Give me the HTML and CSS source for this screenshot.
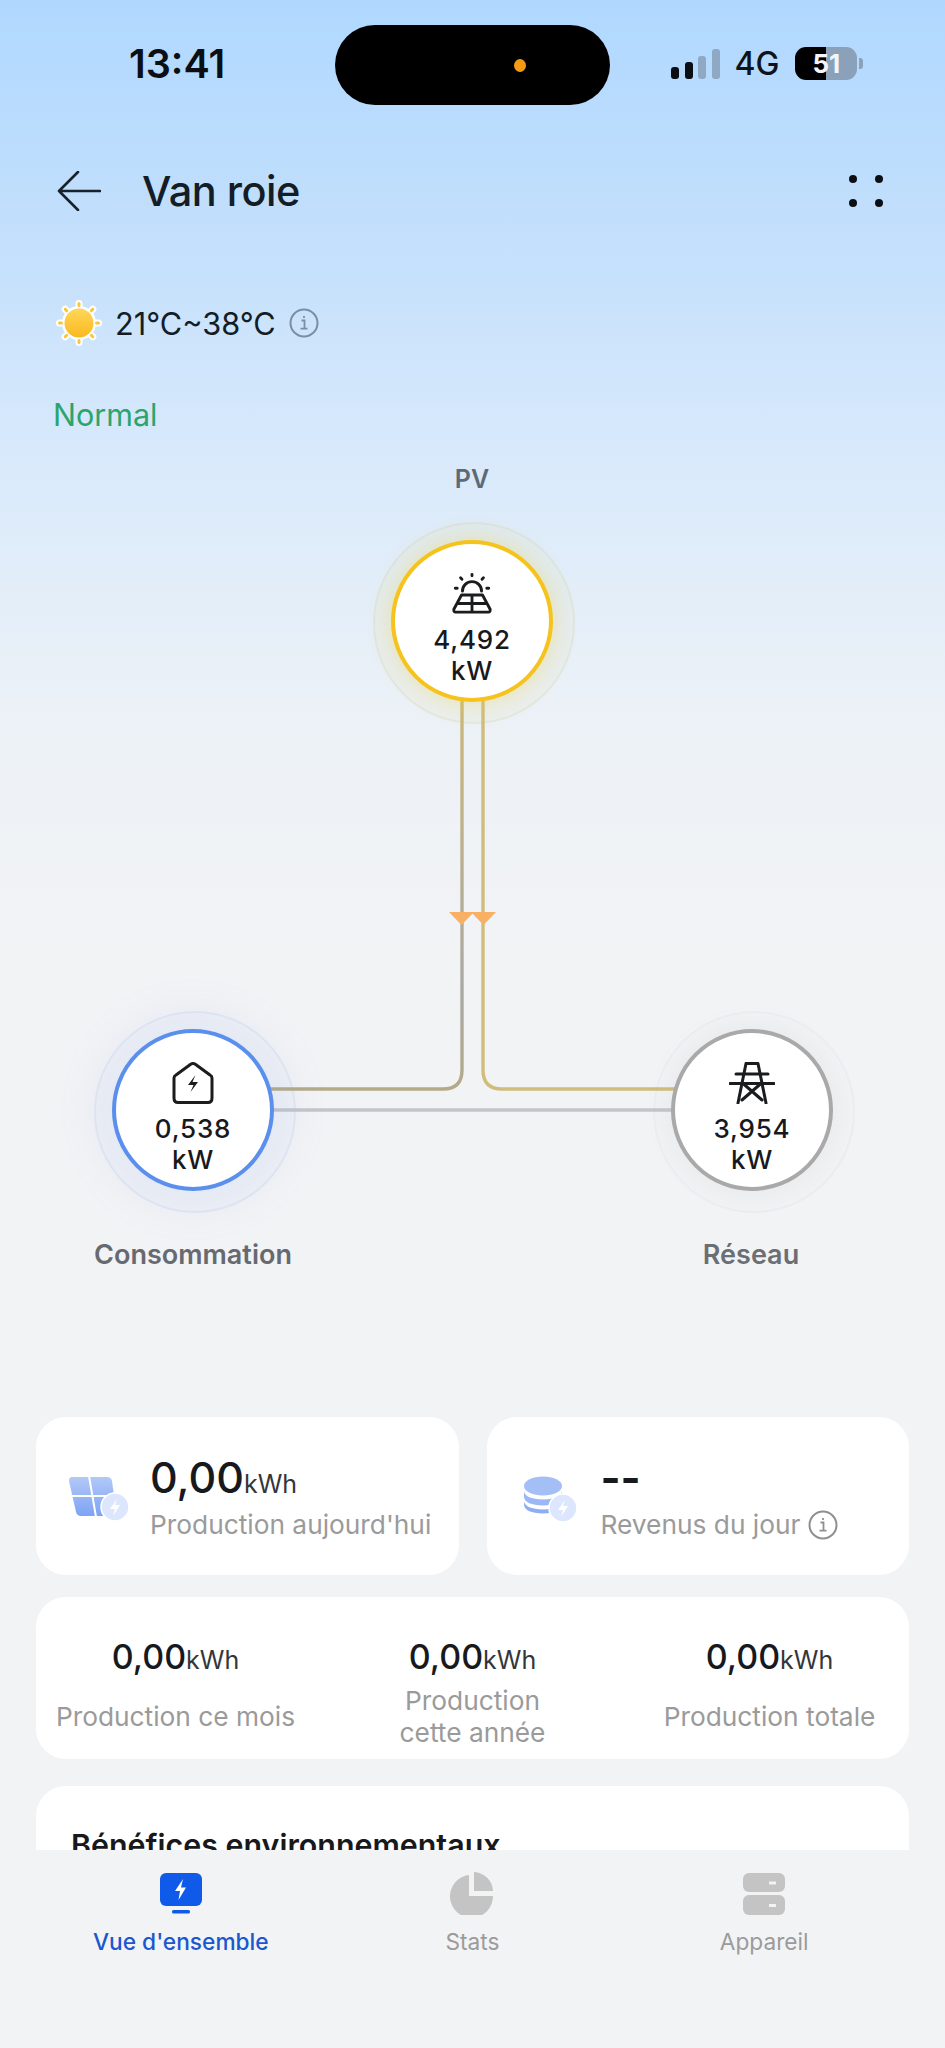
FILE: index.html
```html
<!DOCTYPE html>
<html lang="fr">
<head>
  <meta charset="UTF-8">
  <meta name="viewport" content="width=device-width, initial-scale=1.0">
  <title>Van roie</title>
  <link rel="stylesheet" href="styles.css">
</head>
<body>
  <div class="page">
    <!-- Status bar -->
    <div class="status-bar">
      <span class="status-time">13:41</span>
      <div class="island"><span class="island-dot"></span></div>
      <div class="status-right">
        <div class="signal">
          <span class="bar bar-1"></span>
          <span class="bar bar-2"></span>
          <span class="bar bar-3"></span>
          <span class="bar bar-4"></span>
        </div>
        <span class="network">4G</span>
        <div class="battery">51</div>
        <span class="battery-nub"></span>
      </div>
    </div>

    <main class="content">
      <div class="top-bar">
        <svg class="back-icon" width="44" height="40" viewBox="0 0 44 40" fill="none" stroke="#17222c" stroke-width="2.6" stroke-linecap="round" stroke-linejoin="round">
          <path d="M21 1 L2 20 L21 39 M2 20 H43"/>
        </svg>
        <h1 class="site-name">Van roie</h1>
        <div class="more-dots">
          <span></span><span></span><span></span><span></span>
        </div>
      </div>

      <div class="weather">
        <svg class="sun-icon" width="46" height="46" viewBox="0 0 46 46">
          <defs>
            <linearGradient id="sunFill" x1="0" y1="0" x2="0" y2="1">
              <stop offset="0" stop-color="#ffd75a"/>
              <stop offset="1" stop-color="#fbb81e"/>
            </linearGradient>
          </defs>
          <g stroke="#fff" stroke-width="7" stroke-linecap="round">
            <path d="M23 3.5v2M23 40.5v2M3.5 23h2M40.5 23h2M9.2 9.2l1.4 1.4M35.4 35.4l1.4 1.4M9.2 36.8l1.4-1.4M35.4 10.6l1.4-1.4"/>
          </g>
          <circle cx="23" cy="23" r="17" fill="#fff"/>
          <g stroke="#fbc63a" stroke-width="3" stroke-linecap="round">
            <path d="M23 3.5v2M23 40.5v2M3.5 23h2M40.5 23h2M9.2 9.2l1.4 1.4M35.4 35.4l1.4 1.4M9.2 36.8l1.4-1.4M35.4 10.6l1.4-1.4"/>
          </g>
          <circle cx="23" cy="23" r="14.5" fill="url(#sunFill)"/>
        </svg>
        <span class="temp">21°C~38°C</span>
        <svg class="info-icon" width="30" height="30" viewBox="0 0 30 30" fill="none" stroke="#7b8ea3" stroke-width="2">
          <circle cx="15" cy="15" r="13.5"/>
          <path d="M12.5 12.5h3v8M11.5 20.7h7M15 8v2" stroke-width="1.8"/>
        </svg>
      </div>

      <div class="plant-state">Normal</div>

      <!-- Energy flow diagram, coordinates are the drawing itself -->
      <div class="flow">
        <svg class="flow-lines" width="945" height="860" viewBox="0 0 945 860" fill="none">
          <defs>
            <linearGradient id="lineLeft" x1="0" y1="0" x2="0" y2="1">
              <stop offset="0" stop-color="#cdb878"/>
              <stop offset="0.75" stop-color="#a9a9a6"/>
              <stop offset="1" stop-color="#b3aa88"/>
            </linearGradient>
          </defs>
          <path d="M462 250 V620 Q462 639 443 639 H270" stroke="url(#lineLeft)" stroke-width="3.4"/>
          <path d="M483 250 V620 Q483 639 502 639 H675" stroke="#d0bd7c" stroke-width="3.4"/>
          <path d="M270 660 H675" stroke="#c3c5ca" stroke-width="3.4"/>
          <path d="M449 462 H474 L461.500 475 Z M471 462 H496 L483.500 475 Z" fill="#f9b062"/>
        </svg>

        <div class="node-label label-pv">PV</div>
        <div class="node node-pv">
          <svg class="node-icon" width="44" height="44" viewBox="0 0 44 44" fill="none" stroke="#1b1c1e" stroke-width="3" stroke-linecap="round" stroke-linejoin="round">
            <path d="M12 19 A10 10 0 0 1 32 19 M22 1.500 V3 M10 5 L11.500 6.500 M34 5 L32.500 6.500 M4.500 16 H6.500 M37.500 16 H39.500"/>
            <path d="M11 23 H33 L41 38 Q41.500 41 39 41 H5 Q2.500 41 3 38 Z M7 32 H37 M22 23 V41"/>
          </svg>
          <span class="node-value">4,492<br>kW</span>
        </div>

        <div class="node node-load">
          <svg class="node-icon" width="42" height="42" viewBox="0 0 42 42" fill="none" stroke="#1b1c1e" stroke-width="3" stroke-linejoin="round">
            <path d="M2 16 Q2 14 4 13 L19 2 Q21 1 23 2 L38 13 Q40 14 40 16 V36 Q40 40.500 36 40.500 H6 Q2 40.500 2 36 Z"/>
            <path d="M23.500 13 L16 23 H21.500 L18.500 30 L26 20 H20.500 Z" fill="#1b1c1e" stroke="none"/>
          </svg>
          <span class="node-value">0,538<br>kW</span>
        </div>
        <div class="node-label label-load">Consommation</div>

        <div class="node node-grid">
          <svg class="node-icon" width="46" height="42" viewBox="0 0 46 42" fill="none" stroke="#1b1c1e" stroke-width="3" stroke-linecap="round" stroke-linejoin="round">
            <path d="M17 1.500 H29 L37 41 M17 1.500 L9 41 M7 12 H39 M1 21.500 H45 M14 21.500 L33 38 M32 21.500 L13 38"/>
          </svg>
          <span class="node-value">3,954<br>kW</span>
        </div>
        <div class="node-label label-grid">Réseau</div>
      </div>

      <!-- Yield cards -->
      <div class="card-row">
        <div class="card stat-card">
          <svg class="stat-icon" width="62" height="46" viewBox="0 0 62 46">
            <defs>
              <linearGradient id="panelFill" x1="0" y1="0" x2="0" y2="1">
                <stop offset="0" stop-color="#b2c9f7"/>
                <stop offset="1" stop-color="#7da3f5"/>
              </linearGradient>
            </defs>
            <path d="M3 1 H38 Q42 1 43 5 L47 34 Q47 40 42 40 H12 Q8 40 7 36 L0 5 Q0 1 3 1 Z" fill="url(#panelFill)"/>
            <path d="M20 0 L27 41 M2 20 H46" stroke="#fff" stroke-width="2" fill="none"/>
            <circle cx="46" cy="31" r="14" fill="#dce6fd" stroke="#fff" stroke-width="1.500"/>
            <path d="M48 23 L41 33 H46 L44 40 L51 29 H46 Z" fill="#fff"/>
          </svg>
          <div class="stat-text">
            <div class="stat-value"><span class="num-lg">0,00</span><span class="unit">kWh</span></div>
            <div class="stat-label">Production aujourd'hui</div>
          </div>
        </div>
        <div class="card stat-card">
          <svg class="stat-icon" width="62" height="46" viewBox="0 0 62 46">
            <ellipse cx="23" cy="10" rx="19" ry="9.500" fill="#a4bff6"/>
            <path d="M4 15 Q5 23 23 23.500 Q41 23 42 15 V21 Q41 29 23 29.500 Q5 29 4 21 Z" fill="#9ab8f6"/>
            <path d="M4 25 Q5 33 23 33.500 Q41 33 42 25 V29 Q41 37 23 37.500 Q5 37 4 29 Z" fill="#8dadf5"/>
            <circle cx="43" cy="32" r="14" fill="#dce6fd" stroke="#fff" stroke-width="1.500"/>
            <path d="M45 24 L38 34 H43 L41 41 L48 30 H43 Z" fill="#fff"/>
          </svg>
          <div class="stat-text">
            <div class="stat-value"><span class="num-lg num-empty">--</span></div>
            <div class="stat-label">Revenus du jour
              <svg class="label-info" width="30" height="30" viewBox="0 0 30 30" fill="none" stroke="#8f8f8f" stroke-width="2">
                <circle cx="15" cy="15" r="13.500"/>
                <path d="M12.500 12.500h3v8M11.500 20.700h7M15 8v2" stroke-width="1.800"/>
              </svg>
            </div>
          </div>
        </div>
      </div>

      <div class="card totals-card">
        <div class="total">
          <div class="stat-value"><span class="num-md">0,00</span><span class="unit">kWh</span></div>
          <div class="total-label">Production ce mois</div>
        </div>
        <div class="total">
          <div class="stat-value"><span class="num-md">0,00</span><span class="unit">kWh</span></div>
          <div class="total-label">Production<br>cette année</div>
        </div>
        <div class="total">
          <div class="stat-value"><span class="num-md">0,00</span><span class="unit">kWh</span></div>
          <div class="total-label">Production totale</div>
        </div>
      </div>

      <div class="card benefits-card">
        <h2>Bénéfices environnementaux</h2>
      </div>
    </main>

    <nav class="tab-bar">
      <div class="tab tab-active">
        <svg width="44" height="44" viewBox="0 0 44 44">
          <rect x="1" y="2" width="42" height="33" rx="6" fill="#0f5ae8"/>
          <rect x="13" y="39" width="18" height="3.500" rx="1.500" fill="#0f5ae8"/>
          <path d="M24 8 L16 20 H21 L19.500 29 L27 16.500 H22 Z" fill="#fff"/>
        </svg>
        <span>Vue d'ensemble</span>
      </div>
      <div class="tab">
        <svg width="44" height="44" viewBox="0 0 44 44" fill="#c4c4c4">
          <path d="M19 4 V25 H43 A21.500 21.500 0 1 1 19 4 Z"/>
          <path d="M24 1 A20 20 0 0 1 43 20 H24 Z"/>
        </svg>
        <span>Stats</span>
      </div>
      <div class="tab">
        <svg width="44" height="44" viewBox="0 0 44 44" fill="#c4c4c4">
          <rect x="1" y="2" width="42" height="19" rx="6"/>
          <rect x="1" y="24" width="42" height="20" rx="6"/>
          <path d="M27 10.500h7v3h-7zM27 33h7v3h-7z" fill="#f2f3f5"/>
        </svg>
        <span>Appareil</span>
      </div>
    </nav>
  </div>
</body>
</html>
```

FILE: styles.css
```css
* { box-sizing: border-box; }
html, body { margin: 0; padding: 0; }
body { font-family: Inter, "Noto Sans", sans-serif; color: #17191c; }

.page {
  width: 945px;
  height: 2048px;
  display: flex;
  flex-direction: column;
  overflow: hidden;
  background: linear-gradient(180deg, #b0d8ff 0, #c4e0fc 250px, #d8e9fb 450px, #ebf1f7 700px, #f2f3f5 950px);
}

/* status bar */
.status-bar { position: relative; height: 130px; flex: none; }
.status-time { position: absolute; left: 129px; top: 41px; font-size: 39.5px; line-height: 46px; font-weight: 600; color: #0b0f14; }
.island { position: absolute; left: 335px; top: 25px; width: 275px; height: 80px; border-radius: 40px; background: #000; }
.island-dot { position: absolute; left: 179px; top: 34px; width: 12px; height: 13px; border-radius: 50%; background: #f59a13; }
.status-right { position: absolute; left: 671px; top: 47px; display: flex; align-items: center; height: 33px; }
.signal { display: flex; align-items: flex-end; gap: 5.5px; height: 31px; }
.bar { width: 8px; border-radius: 3px; background: #0b0f14; }
.bar-1 { height: 12px; }
.bar-2 { height: 17px; }
.bar-3 { height: 23px; background: #8fa9c4; }
.bar-4 { height: 30px; background: #8fa9c4; }
.network { margin-left: 15px; font-size: 32px; font-weight: 500; color: #0f141a; }
.battery {
  margin-left: 16px;
  width: 62px;
  height: 33px;
  border-radius: 11px;
  background: linear-gradient(90deg, #000 50%, #8aa1b9 50%);
  color: #f2f6fb;
  font-size: 26px;
  font-weight: 700;
  line-height: 33px;
  text-align: center;
}
.battery-nub { margin-left: 2px; width: 4px; height: 11px; border-radius: 0 3px 3px 0; background: #8aa1b9; }

/* main scroll area */
.content { flex: 1; min-height: 0; overflow: hidden; }

.top-bar { display: flex; align-items: center; height: 60px; margin-top: 31px; padding: 0 62px 0 57px; }
.site-name { margin: 0 0 0 41px; font-size: 41.5px; font-weight: 500; color: #141d26; letter-spacing: -0.5px; }
.more-dots { margin-left: auto; display: grid; grid-template-columns: 8px 8px; gap: 16px 18px; }
.more-dots span { width: 8px; height: 8px; border-radius: 50%; background: #0b0f14; }

.weather { display: flex; align-items: center; height: 46px; margin-top: 79px; padding-left: 56px; }
.temp { margin-left: 13px; font-size: 30.7px; color: #141d26; }
.info-icon { margin-left: 13px; }

.plant-state { margin: 51px 0 0 53px; font-size: 30.5px; line-height: 36px; color: #2ca46d; }

/* flow diagram */
.flow { position: relative; z-index: 0; height: 967px; margin-top: 17px; }
.flow-lines { position: absolute; left: 0; top: 0; }

.node-label { position: absolute; font-size: 27px; line-height: 30px; font-weight: 600; color: #666a70; transform: translateX(-50%); white-space: nowrap; }
.label-pv { left: 472px; top: 14px; font-size: 25px; color: #5d6a75; }
.label-load { left: 193px; top: 790px; }
.label-grid { left: 751px; top: 790px; color: #6b6f75; }

.node {
  position: absolute;
  width: 162px;
  height: 162px;
  border-radius: 50%;
  border: 4px solid;
  background: #fff;
  display: flex;
  flex-direction: column;
  align-items: center;
  padding-top: 29px;
}
.node::before {
  content: "";
  position: absolute;
  left: -22px;
  top: -22px;
  width: 198px;
  height: 198px;
  border-radius: 50%;
  border: 2px solid;
  z-index: -1;
}
.node-pv { left: 391px; top: 90px; border-color: #f5c31c; box-shadow: 0 0 20px 4px rgba(240, 205, 70, 0.3); }
.node-pv::before { border-color: rgba(210, 208, 170, 0.25); background: rgba(230, 228, 195, 0.16); }
.node-load { left: 112px; top: 579px; border-color: #5b8fee; box-shadow: 0 0 44px 14px rgba(120, 155, 235, 0.12); }
.node-load::before { border-color: rgba(195, 208, 235, 0.3); background: rgba(225, 232, 248, 0.12); }
.node-grid { left: 671px; top: 579px; border-color: #a9a9a9; box-shadow: 0 0 24px 3px rgba(150, 150, 150, 0.09); }
.node-grid::before { border-color: rgba(222, 224, 227, 0.3); background: rgba(238, 239, 241, 0.15); }

.node-icon { flex: none; height: 42px; }
.node-value { margin-top: 9px; font-size: 26px; line-height: 31px; font-weight: 500; text-align: center; letter-spacing: 0.8px; color: #17191c; }

/* cards */
.card { background: #fff; border-radius: 30px; }
.card-row { display: grid; grid-template-columns: 1fr 1fr; gap: 28px; padding: 0 36px; }
.stat-card { display: flex; align-items: center; height: 158px; padding-left: 33px; }
.stat-icon { flex: none; margin: 6px 19px 0 0; }
.stat-value { display: flex; align-items: baseline; white-space: nowrap; }
.num-lg { font-size: 43px; line-height: 50px; font-weight: 500; }
.num-md { font-size: 34px; line-height: 40px; font-weight: 500; }
.num-empty { font-weight: 700; }
.unit { font-size: 25px; color: #33363a; }
.stat-label { display: flex; align-items: center; gap: 8px; margin-top: 7px; font-size: 26.3px; line-height: 32px; color: #9a9a9a; white-space: nowrap; }
.label-info { flex: none; }

.totals-card {
  display: grid;
  grid-template-columns: repeat(3, 279px);
  gap: 18px;
  height: 162px;
  margin: 22px 36px 0;
  padding-top: 40px;
}
.total { display: flex; flex-direction: column; align-items: center; }
.total-label { height: 64px; display: flex; align-items: center; margin-top: 8px; font-size: 26.3px; line-height: 32px; color: #9a9a9a; text-align: center; }

.benefits-card { height: 120px; margin: 27px 36px 0; padding: 39px 35px 0; }
.benefits-card h2 { margin: 0; font-size: 30.4px; line-height: 40px; font-weight: 600; color: #17191c; white-space: nowrap; }

/* bottom tabs */
.tab-bar {
  flex: none;
  height: 198px;
  display: grid;
  grid-template-columns: repeat(3, 1fr);
  padding: 21px 35px 0;
  background: #f2f3f5;
}
.tab { display: flex; flex-direction: column; align-items: center; gap: 11px; font-size: 22.7px; line-height: 32px; color: #9b9b9b; }
.tab-active { color: #1a57d0; font-weight: 500; }
```
